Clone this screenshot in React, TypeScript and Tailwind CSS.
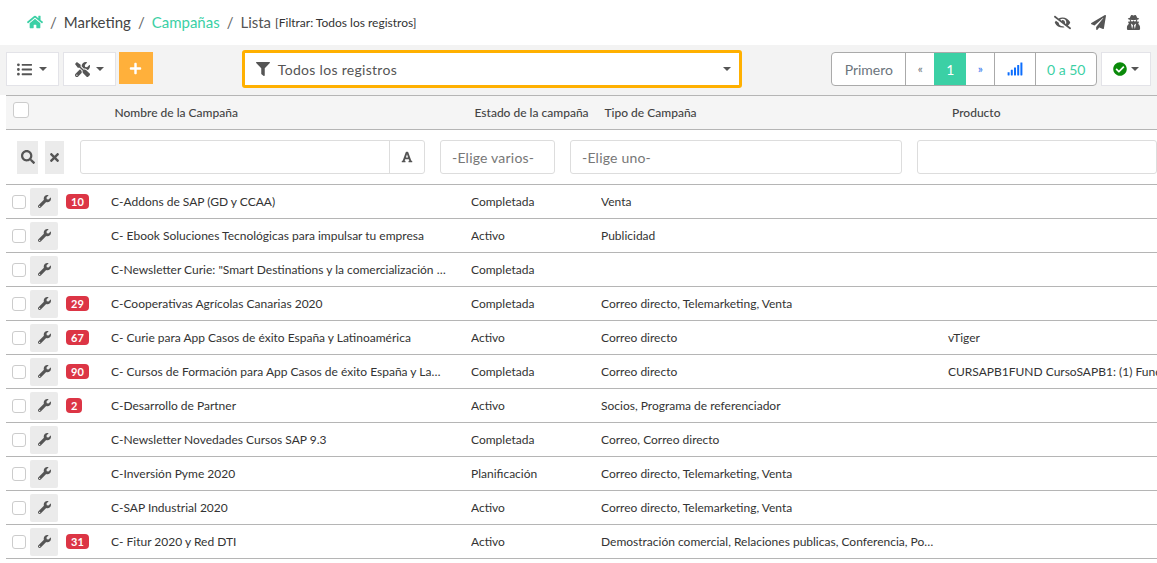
import React from "react";
import { FaHome, FaListUl, FaTools, FaPlus, FaFilter, FaEyeSlash, FaPaperPlane, FaUserSecret, FaSearch, FaTimes, FaFont, FaWrench, FaCheckCircle, FaSignal } from "react-icons/fa";

const rows: [string, string, string, string, string][] = [
  ["10", "C-Addons de SAP (GD y CCAA)", "Completada", "Venta", ""],
  ["", "C- Ebook Soluciones Tecnológicas para impulsar tu empresa", "Activo", "Publicidad", ""],
  ["", "C-Newsletter Curie: \"Smart Destinations y la comercialización de productos turísticos\"", "Completada", "", ""],
  ["29", "C-Cooperativas Agrícolas Canarias 2020", "Completada", "Correo directo, Telemarketing, Venta", ""],
  ["67", "C- Curie para App Casos de éxito España y Latinoamérica", "Activo", "Correo directo", "vTiger"],
  ["90", "C- Cursos de Formación para App Casos de éxito España y Latinoamérica", "Completada", "Correo directo", "CURSAPB1FUND CursoSAPB1: (1) Fundamentos"],
  ["2", "C-Desarrollo de Partner", "Activo", "Socios, Programa de referenciador", ""],
  ["", "C-Newsletter Novedades Cursos SAP 9.3", "Completada", "Correo, Correo directo", ""],
  ["", "C-Inversión Pyme 2020", "Planificación", "Correo directo, Telemarketing, Venta", ""],
  ["", "C-SAP Industrial 2020", "Activo", "Correo directo, Telemarketing, Venta", ""],
  ["31", "C- Fitur 2020 y Red DTI", "Activo", "Demostración comercial, Relaciones publicas, Conferencia, Posicionamiento web", ""],
];

function Caret() {
  return <span className="w-0 h-0 border-x-[4px] border-x-transparent border-t-[4px] border-t-[#555]" />;
}

export default function App() {
  return (
    <div className="w-[1157px] h-[563px] overflow-hidden bg-white text-[#333] font-['Lato','Liberation_Sans',sans-serif]">
      <header className="h-[45px] flex items-center justify-between pl-[27px] pr-[16px] bg-white">
        <div className="flex items-center text-[15px]">
          <FaHome className="text-[#3bd0a5] text-[16px] mr-[7px] w-[16px] -translate-y-[1px]" />
          <span className="text-[#666] mr-[7px]">/</span>
          <span className="text-[#444] mr-[7px]">Marketing</span>
          <span className="text-[#666] mr-[7px]">/</span>
          <span className="text-[#3bd0a5] mr-[7px]">Campañas</span>
          <span className="text-[#666] mr-[7px]">/</span>
          <span className="text-[#555] mr-[4px]">Lista</span>
          <span className="text-[12px] text-[#333]">[Filtrar: Todos los registros]</span>
        </div>
        <div className="flex items-center gap-[20px] text-[#555]">
          <FaEyeSlash className="text-[17px]" />
          <FaPaperPlane className="text-[15px]" />
          <FaUserSecret className="text-[15px]" />
        </div>
      </header>

      <div className="bg-[#f3f3f3] h-[50px] pl-[6px] pr-[6px] flex items-start pt-[7px] relative">
        <button className="w-[53px] h-[34px] bg-white border border-[#e3e3e8] flex items-center justify-center gap-[7px] text-[#555]">
          <FaListUl className="text-[15px]" /><Caret />
        </button>
        <button className="ml-[4px] w-[53px] h-[34px] bg-white border border-[#e3e3e8] flex items-center justify-center gap-[6px] text-[#555]">
          <FaTools className="text-[15px]" /><Caret />
        </button>
        <button className="ml-[3px] w-[34px] h-[32px] bg-[#ffb03b] flex items-center justify-center text-white">
          <FaPlus className="text-[13px]" />
        </button>
        <div className="ml-[89px] -mt-[2px] w-[501px] h-[38px] bg-white border-[3px] border-[#ffb000] rounded-[3px] flex items-center pl-[11px] pr-[8px] text-[#555]">
          <FaFilter className="text-[14px] mr-[8px]" />
          <span className="text-[14px] tracking-[0.3px] flex-1">Todos los registros</span>
          <Caret />
        </div>
        <div className="ml-[89px] h-[34px] flex items-stretch bg-white border border-[#aaa] rounded-[4px] text-[14px] overflow-hidden">
          <span className="w-[74px] flex items-center justify-center text-[#6c757d] border-r border-[#aaa]">Primero</span>
          <span className="w-[28px] flex items-center justify-center text-[#6c757d] text-[12px]">«</span>
          <span className="w-[32px] flex items-center justify-center text-white bg-[#3bd0a5]">1</span>
          <span className="w-[29px] flex items-center justify-center text-[#2f6fed] text-[12px] border-r border-[#aaa]">»</span>
          <span className="w-[41px] flex items-center justify-center text-[#0d6efd] border-r border-[#aaa]"><FaSignal className="text-[16px]" /></span>
          <span className="flex-1 w-[60px] flex items-center justify-center text-[#3bd0a5]">0 a 50</span>
        </div>
        <button className="ml-[4px] w-[50px] h-[34px] bg-white border border-[#e3e3e8] flex items-center justify-center gap-[4px]">
          <FaCheckCircle className="text-[14px] text-[#0a8a0a]" /><Caret />
        </button>
      </div>

      <div className="ml-[6px] w-[1151px] overflow-hidden">
        <div className="h-[35px] bg-[#f5f5f5] border-y border-[#b5b5b5] flex items-center text-[12px] font-medium text-[#444]">
          <div className="w-[108.5px] pl-[7px] shrink-0 -mt-[6px]">
            <span className="block w-[16px] h-[16px] bg-white border border-[#ccc] rounded-[3px]" />
          </div>
          <div className="w-[360px] shrink-0">Nombre de la Campaña</div>
          <div className="w-[130px] shrink-0">Estado de la campaña</div>
          <div className="w-[347.5px] shrink-0">Tipo de Campaña</div>
          <div>Producto</div>
        </div>
        <div className="h-[55px] bg-white flex items-center border-b border-[#b5b5b5]">
          <button className="ml-[11px] w-[38px] h-[33px] bg-[#ebebeb] flex items-center justify-center text-[#555]"><FaSearch className="text-[14px]" /></button>
          <button className="ml-[7px] w-[33px] h-[33px] bg-[#ebebeb] flex items-center justify-center text-[#555]"><FaTimes className="text-[13px]" /></button>
          <div className="ml-[16px] w-[345px] h-[34px] border border-[#ddd] rounded-[3px] flex shrink-0">
            <div className="flex-1" />
            <div className="w-[35px] border-l border-[#ddd] flex items-center justify-center text-[#555]"><FaFont className="text-[12px]" /></div>
          </div>
          <div className="ml-[15px] w-[115px] h-[34px] border border-[#ddd] rounded-[3px] shrink-0 flex items-center pl-[11px] text-[14px] text-[#777] tracking-[0.2px]">-Elige varios-</div>
          <div className="ml-[15px] w-[332px] h-[34px] border border-[#ddd] rounded-[3px] shrink-0 flex items-center pl-[11px] text-[14px] text-[#777] tracking-[0.2px]">-Elige uno-</div>
          <div className="ml-[15px] w-[240px] h-[34px] border border-[#ddd] rounded-[3px] shrink-0" />
        </div>
        {rows.map((r, i) => (
          <div key={i} className="h-[34px] flex items-center border-b border-[#b5b5b5] text-[12px] text-[#333]">
            <span className="ml-[6px] w-[14px] h-[14px] bg-white border border-[#ccc] rounded-[3px] shrink-0" />
            <span className="ml-[4px] w-[28px] h-[28px] bg-[#ebebeb] rounded-[2px] flex items-center justify-center text-[#555] shrink-0"><FaWrench className="text-[13px]" /></span>
            <span className="ml-[8px] w-[45px] shrink-0">
              {r[0] && <span className="inline-flex items-center justify-center h-[15px] px-[5px] bg-[#dc3545] rounded-[4px] text-white text-[11px] font-bold leading-none">{r[0]}</span>}
            </span>
            <div className="w-[335px] mr-[25px] shrink-0 truncate">{r[1]}</div>
            <div className="w-[130px] shrink-0 truncate">{r[2]}</div>
            <div className="w-[336px] mr-[11px] shrink-0 truncate">{r[3]}</div>
            <div className="whitespace-nowrap">{r[4]}</div>
          </div>
        ))}
      </div>
    </div>
  );
}
